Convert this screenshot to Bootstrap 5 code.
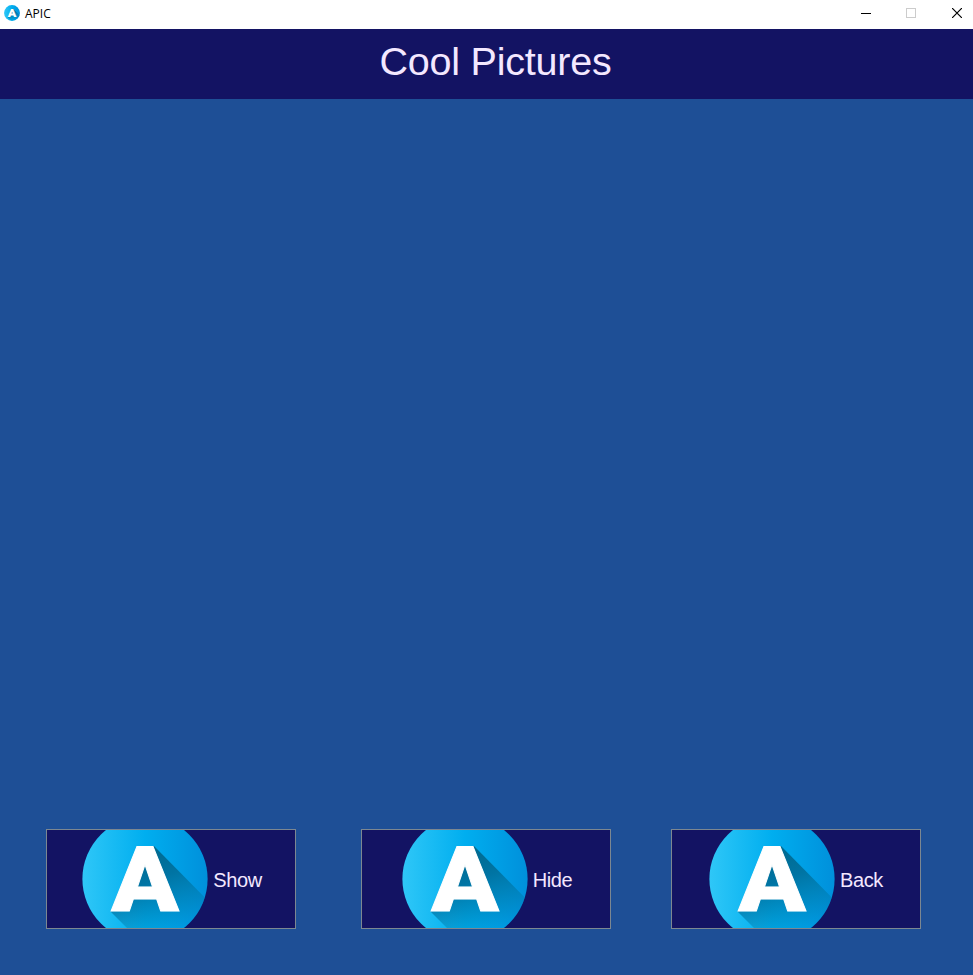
<!DOCTYPE html>
<html lang="en">
<head>
<meta charset="utf-8">
<meta name="viewport" content="width=device-width, initial-scale=1">
<title>APIC</title>
<link href="https://cdn.jsdelivr.net/npm/bootstrap@5.3.0/dist/css/bootstrap.min.css" rel="stylesheet">
<style>
body { background: #1e4f96; font-family: "Liberation Sans", Arial, sans-serif; }
.titlebar { height: 29px; padding: 0 11px 3px 4px; }
.app-name { font: 12px/16px "Open Sans", "Noto Sans", sans-serif; color: #000; margin-left: 5px; padding-top: 1px; }
.win-controls { gap: 35px; padding-bottom: 1px; }
.close-glyph { margin-left: 1px; }
.hero { height: 70px; background: #131363; color: #f3e8ff; padding: 0 0 6px 18px; }
.hero h1 { font-size: 39.5px; line-height: 46px; letter-spacing: -.22px; }
.actions { padding: 0 52px 46px 46px; }
.pic-btn { width: 250px; height: 100px; background: #131363; border: 1px solid #7c8791; border-radius: 0; color: #f3e8ff; font-size: 20px; line-height: 24px; letter-spacing: -.35px; }
.pic-btn:hover { background: #1b1b78; color: #fff; border-color: #7c8791; }
.pic-btn svg { flex: none; margin-top: -1px; margin-right: 5px; }
.pic-btn span { padding-top: 2px; }
.gap-hide { margin-left: 65px; }
.gap-back { margin-left: 60px; }
.nudge { padding: 0 0 0 2px; }
.logo-letter { font: 900 91px Roboto, sans-serif; }
</style>
</head>
<body class="vh-100 d-flex flex-column overflow-hidden">
<svg width="0" height="0" class="position-absolute" aria-hidden="true">
  <defs>
    <linearGradient id="disc" x1="0" x2="1" y1="0" y2="0">
      <stop offset="0" stop-color="#2fc7f7"/><stop offset=".5" stop-color="#00aeef"/><stop offset="1" stop-color="#0090db"/>
    </linearGradient>
    <linearGradient id="shade" gradientUnits="userSpaceOnUse" x1="62" y1="35" x2="92" y2="117">
      <stop offset="0" stop-color="#00698f"/><stop offset=".35" stop-color="#0074a3"/><stop offset="1" stop-color="#0078a8" stop-opacity="0"/>
    </linearGradient>
    <clipPath id="round"><circle cx="63" cy="63" r="62.6"/></clipPath>
    <symbol id="logo" viewBox="0 0 126 126">
      <circle cx="63" cy="63" r="62.6" fill="url(#disc)"/>
      <path d="M72 30 L142 101 V142 H75 L28.5 95.5 L54 34Z" fill="url(#shade)" clip-path="url(#round)"/>
      <text class="logo-letter" transform="translate(62.9 95.4) scale(1.09 1)" text-anchor="middle" fill="#fff" stroke="#fff" stroke-width=".9">A</text>
    </symbol>
  </defs>
</svg>
<header class="titlebar bg-white d-flex align-items-center flex-shrink-0">
  <svg width="16" height="16"><use href="#logo"/></svg>
  <span class="app-name">APIC</span>
  <div class="win-controls d-flex ms-auto">
    <svg width="10" height="10" shape-rendering="crispEdges"><path d="M0 5.5H10" stroke="#000"/></svg>
    <svg width="10" height="10"><rect x=".5" y=".5" width="9" height="9" fill="none" stroke="#ccc"/></svg>
    <svg class="close-glyph" width="10" height="10"><path d="M0 0L10 10M10 0L0 10" stroke="#000" stroke-width="1.2"/></svg>
  </div>
</header>
<div class="hero d-flex align-items-center justify-content-center flex-shrink-0"><h1 class="fw-normal m-0">Cool Pictures</h1></div>
<main class="flex-grow-1 d-flex align-items-end">
  <div class="actions d-flex">
    <button type="button" class="btn pic-btn nudge d-flex align-items-center justify-content-center overflow-hidden"><svg width="126" height="126"><use href="#logo"/></svg><span>Show</span></button>
    <button type="button" class="btn pic-btn nudge gap-hide d-flex align-items-center justify-content-center overflow-hidden"><svg width="126" height="126"><use href="#logo"/></svg><span>Hide</span></button>
    <button type="button" class="btn pic-btn gap-back d-flex align-items-center justify-content-center overflow-hidden p-0"><svg width="126" height="126"><use href="#logo"/></svg><span>Back</span></button>
  </div>
</main>
<script src="https://cdn.jsdelivr.net/npm/bootstrap@5.3.0/dist/js/bootstrap.bundle.min.js"></script>
</body>
</html>
